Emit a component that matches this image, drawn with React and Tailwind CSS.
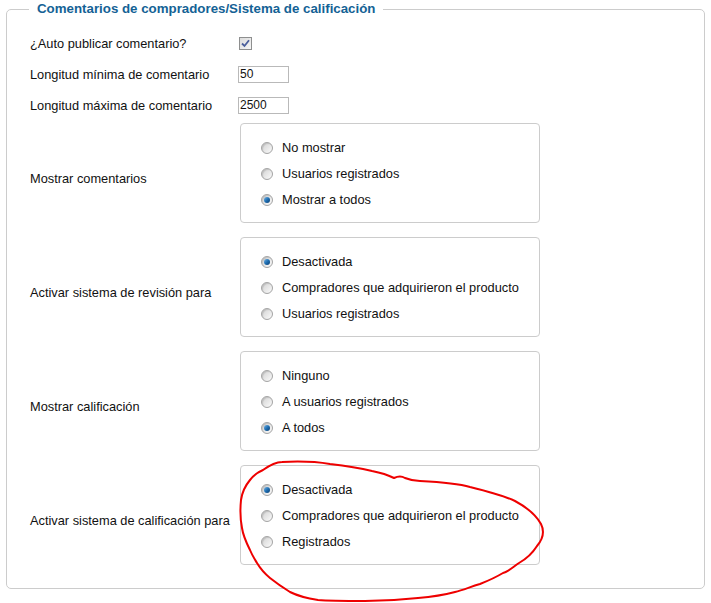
import React from 'react';

const font = { fontFamily: '"Liberation Sans", Arial, sans-serif' };

const Radio = ({ checked }) => (
    <span className="relative flex items-center justify-center w-[12px] h-[12px] rounded-full border border-[#a4a4a4] bg-gradient-to-br from-[#d2d2d2] to-[#fbfbfb] shadow-[inset_1px_1px_1px_rgba(0,0,0,0.12)]">
        {checked && (
            <span className="w-[6px] h-[6px] rounded-full bg-gradient-to-br from-[#6fb3e6] via-[#1f6fb2] to-[#0c3f73]" />
        )}
    </span>
);

const Checkbox = () => (
    <span className="flex items-center justify-center w-[13px] h-[13px] border border-[#8e8f8f] bg-gradient-to-br from-[#dcdcdc] to-[#f6f6f6]">
        <svg width="9" height="9" viewBox="0 0 9 9">
            <path d="M1 4.5 L3.5 7 L8 1.2" fill="none" stroke="#4b5f9c" strokeWidth="1.8" />
        </svg>
    </span>
);

const RadioGroup = ({ options, selected }) => (
    <div className="ml-[2px] w-[300px] h-[100px] border border-[#cccccc] rounded-[4px] pl-[20px] pt-[11px] flex flex-col">
        {options.map((opt, i) => (
            <div key={i} className="h-[26px] flex items-center gap-[9px]">
                <Radio checked={i === selected} />
                <span>{opt}</span>
            </div>
        ))}
    </div>
);

const TextInput = ({ value }) => (
    <div className="w-[51px] h-[17px] border border-[#b9b9b9] bg-white pl-[1px] text-[12px] leading-[15px]">{value}</div>
);

const groups = [
    { label: 'Mostrar comentarios', options: ['No mostrar', 'Usuarios registrados', 'Mostrar a todos'], selected: 2 },
    { label: 'Activar sistema de revisión para', options: ['Desactivada', 'Compradores que adquirieron el producto', 'Usuarios registrados'], selected: 0 },
    { label: 'Mostrar calificación', options: ['Ninguno', 'A usuarios registrados', 'A todos'], selected: 2 },
    { label: 'Activar sistema de calificación para', options: ['Desactivada', 'Compradores que adquirieron el producto', 'Registrados'], selected: 0 },
];

export default function App() {
    return (
        <div className="relative w-[711px] h-[603px] bg-white overflow-hidden text-[12.8px] text-[#111]" style={font}>
            <fieldset className="mx-[6px] w-[699px] border border-[#cccccc] rounded-[5px] pb-[23px]">
                <legend className="ml-[22px] px-[8px] text-[13.3px] leading-[18px] font-bold text-[#146295]">
                    Comentarios de compradores/Sistema de calificación
                </legend>

                <div className="pt-[10px] pl-[23px]">
                    {/* simple fields */}
                    <div className="h-[31px] flex items-center">
                        <span className="w-[209px]">¿Auto publicar comentario?</span>
                        <Checkbox />
                    </div>
                    <div className="h-[31px] flex items-center">
                        <span className="w-[208px]">Longitud mínima de comentario</span>
                        <TextInput value="50" />
                    </div>
                    <div className="h-[31px] flex items-center">
                        <span className="w-[208px]">Longitud máxima de comentario</span>
                        <TextInput value="2500" />
                    </div>

                    {/* radio groups */}
                    <div className="pt-[2px] flex flex-col gap-[14px]">
                        {groups.map((g, i) => (
                            <div key={i} className="flex items-center">
                                <span className="w-[208px] pt-[11px] whitespace-nowrap">{g.label}</span>
                                <RadioGroup options={g.options} selected={g.selected} />
                            </div>
                        ))}
                    </div>
                </div>
            </fieldset>

            {/* hand-drawn red mark */}
            <svg className="absolute inset-0 pointer-events-none" width="711" height="603" viewBox="0 0 711 603">
                <path
                    d="M263 470 C270 465 276 462 282 462 C300 461 318 462 330 464 C348 466 360 468 372 471 C382 473 390 476 394 478 C398 476 402 476 405 478 C410 480 414 481 420 481 C440 482 460 484 470 487 C490 492 505 496 515 501 C528 508 536 515 541 524 C545 532 542 540 537 546 C532 554 526 559 519 563 C513 567 508 572 503 573 C498 576 490 580 480 584 C470 587 463 590 455 592 C440 596 430 597 418 598 C400 600 385 601 365 601 C345 601 330 601 318 600 C305 598 296 595 290 592 C282 587 275 582 270 578 C264 573 260 568 257 563 C254 558 252 555 250 550 C246 542 243 535 242 528 C240 518 240 510 241 500 C242 493 245 486 250 480 C254 475 258 472 263 470 Z"
                    fill="none"
                    stroke="#ee0000"
                    strokeWidth="2"
                    strokeLinejoin="round"
                />
            </svg>
        </div>
    );
}
